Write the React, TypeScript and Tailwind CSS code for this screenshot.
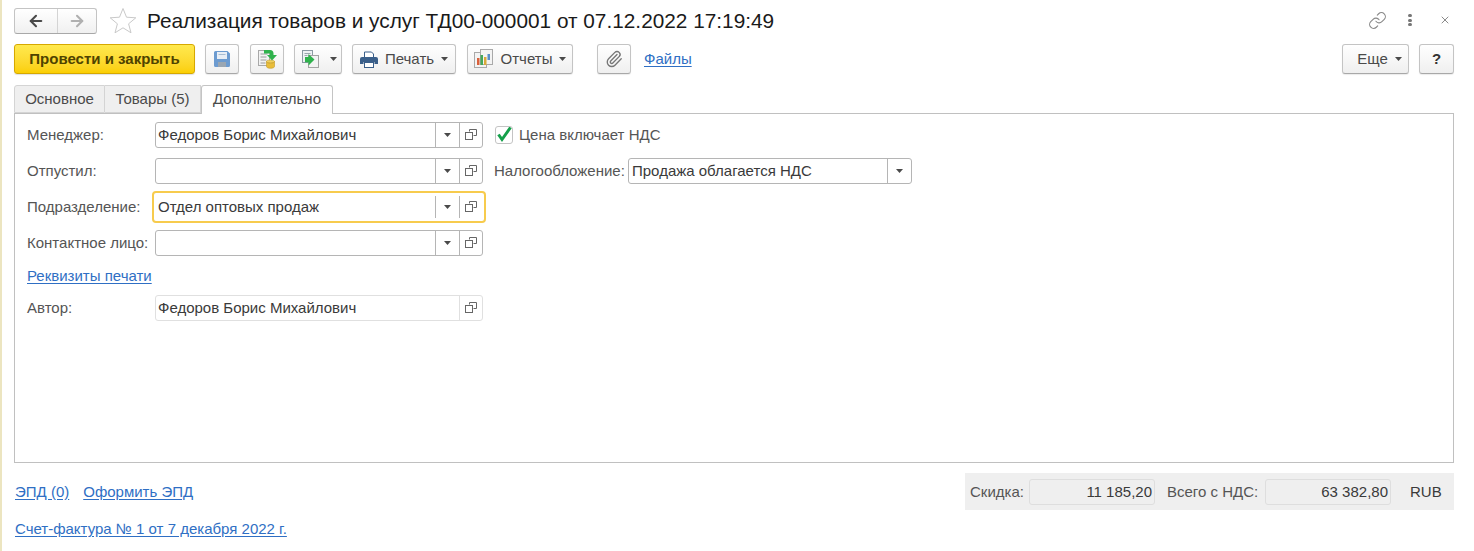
import { ArrowLeft, ArrowRight, Link as ChainIcon, Paperclip, X } from "lucide-react";
import type { ReactNode } from "react";

const Caret = () => (
  <svg width="7" height="4" viewBox="0 0 7 4" className="shrink-0">
    <path d="M0 0h7L3.5 4z" fill="#4a4a4a" />
  </svg>
);

const OpenIcon = () => (
  <svg width="12" height="12" viewBox="0 0 12 12" fill="none" stroke="#666" strokeWidth="1">
    <path d="M4.5 2.5V.5h7v6h-3" />
    <rect x="0.5" y="3.5" width="7" height="7" fill="#fff" />
  </svg>
);

const SaveIcon = () => (
  <svg width="18" height="18" viewBox="0 0 18 18">
    <path d="M1 2.500A1.500 1.500 0 0 1 2.500 1h12L17 3.500v12a1.500 1.500 0 0 1-1.500 1.500h-13A1.500 1.500 0 0 1 1 15.500z" fill="#6c9bd0" />
    <rect x="4" y="2" width="10" height="7" fill="#e8eef5" />
    <rect x="5" y="12" width="8" height="5" fill="#9aa6b2" />
    <rect x="5.500" y="4" width="7" height="1" fill="#a9bdd2" />
  </svg>
);

const PostIcon = () => (
  <svg width="20" height="20" viewBox="0 0 20 20">
    <rect x="1.500" y="1.500" width="11" height="15" fill="#f3f3f3" stroke="#a8a8a8" />
    <path d="M3.500 5h7M3.500 8h6M3.500 11h6M3.500 14h5" stroke="#9a9a9a" />
    <ellipse cx="13.500" cy="12.500" rx="4" ry="1.600" fill="#f0d060" stroke="#c29b26" strokeWidth=".6" />
    <path d="M9.500 12.500v5c0 1 1.800 1.800 4 1.800s4-.8 4-1.800v-5c0 1-1.800 1.700-4 1.700s-4-.7-4-1.700z" fill="#e9bd3a" stroke="#c29b26" strokeWidth=".6" />
    <path d="M7 1h6a3.500 3.500 0 0 1 3.500 3.500V6H20l-5 5.500L10 6h3V4.500H7z" fill="#2fb24c" />
  </svg>
);

const CreateIcon = () => (
  <svg width="20" height="20" viewBox="0 0 20 20">
    <rect x="1.500" y="1.500" width="10" height="12" fill="#eef1f3" stroke="#8b9aa3" />
    <rect x="7.500" y="6.500" width="10" height="12" fill="#f3f3f3" stroke="#a4a4a4" />
    <path d="M3.500 4.500h6M3.500 6.500h3" stroke="#9aa6ad" />
    <path d="M4 8h3.500V5l6 5.500-6 6v-3.200H4z" fill="#2fb24c" />
  </svg>
);

const PrintIcon = () => (
  <svg width="18" height="17" viewBox="0 0 18 17">
    <path d="M4.500 1h7l2 2v4h-9z" fill="#fff" stroke="#3a5f8a" />
    <path d="M2 6h14a2 2 0 0 1 2 2v5h-3.500v-2h-11v2H0V8a2 2 0 0 1 2-2z" fill="#3a5f8a" />
    <rect x="4.500" y="11.500" width="9" height="5" fill="#fff" stroke="#3a5f8a" />
  </svg>
);

const ReportIcon = () => (
  <svg width="20" height="20" viewBox="0 0 20 20">
    <rect x="0.500" y="3.500" width="12" height="15" fill="#f3f3f3" stroke="#a9a9a9" />
    <rect x="6.500" y="0.500" width="12" height="15" fill="#f3f3f3" stroke="#a9a9a9" />
    <rect x="3" y="9" width="2.500" height="7" fill="#d9603b" />
    <rect x="6.500" y="6" width="2.500" height="10" fill="#43a75a" />
    <rect x="10" y="8" width="2.500" height="8" fill="#d9a93b" />
    <rect x="13.500" y="5" width="2.500" height="6" fill="#5b8fc9" />
  </svg>
);

const Star = () => (
  <svg width="28" height="27" viewBox="0 0 28 27" fill="none" stroke="#c9c9c9" strokeWidth="1">
    <path d="M14 1.500l3.500 8.700 9.300.6-7.200 6 2.400 9-8-5-8 5 2.400-9-7.200-6 9.300-.6z" />
  </svg>
);

const Btn = ({ className = "", children }: { className?: string; children: ReactNode }) => (
  <div className={`h-[30px] flex items-center justify-center rounded-[3px] border border-[#c4c4c4] border-b-[#a8a8a8] bg-gradient-to-b from-white to-[#efefef] shadow-[0_1px_1px_rgba(0,0,0,0.08)] text-[#4a4a4a] ${className}`}>
    {children}
  </div>
);

const Label = ({ children, className = "" }: { children: ReactNode; className?: string }) => (
  <div className={`w-[128px] shrink-0 text-[#555] ${className}`}>{children}</div>
);

const Field = ({ value = "", focused = false, choice = true, readOnly = false }: { value?: string; focused?: boolean; choice?: boolean; readOnly?: boolean }) => {
  const divider = readOnly ? "border-[#e0e0e0]" : "border-[#b5b5b5]";
  const cellHeight = focused ? "h-[22px]" : "h-full";
  return (
    <div
      className={`w-[328px] h-[26px] shrink-0 flex items-center border bg-white text-[#3a3a3a] ${
        focused
          ? "rounded-[1px] border-transparent outline-2 outline-offset-1 outline-[#f7cb4d]"
          : `rounded-[3px] ${divider}`
      }`}
    >
      <div className="flex-1 pl-[2px] truncate">{value}</div>
      {choice && (
        <div className={`w-[24px] ${cellHeight} flex items-center justify-center border-l border-[#b5b5b5]`}>
          <Caret />
        </div>
      )}
      <div className={`w-[23px] ${cellHeight} flex items-center justify-center border-l ${divider}`}>
        <OpenIcon />
      </div>
    </div>
  );
};

const SumField = ({ value }: { value: string }) => (
  <div className="w-[126px] h-[26px] flex items-center justify-end pr-[2px] rounded-[3px] border border-[#dedede] bg-[#efefef] text-[#3a3a3a]">
    {value}
  </div>
);

const Link = ({ children, className = "" }: { children: ReactNode; className?: string }) => (
  <a className={`text-[#2f6fc4] underline underline-offset-2 ${className}`}>{children}</a>
);

export default function App() {
  return (
    <div className="w-[1474px] h-[551px] overflow-hidden bg-white border-l-2 border-[#ece5c0] pl-[12px] pr-[20px] font-['Liberation_Sans',sans-serif] text-[15px] leading-[18px]">
      {/* title */}
      <div className="h-[44px] pt-[8px] flex items-start">
        <div className="w-[83px] h-[26px] flex rounded-[3px] border border-[#c4c4c4] border-b-[#a8a8a8] bg-gradient-to-b from-white to-[#f0f0f0]">
          <div className="w-[43px] flex items-center justify-center border-r border-[#d4d4d4]">
            <ArrowLeft size={18} strokeWidth={2.8} color="#4a4a4a" />
          </div>
          <div className="flex-1 flex items-center justify-center">
            <ArrowRight size={18} strokeWidth={2.8} color="#b0b0b0" />
          </div>
        </div>
        <div className="ml-[12px] -mt-[1px]">
          <Star />
        </div>
        <div className="ml-[10px] text-[20.8px] leading-[26px] text-[#1a1a1a]">
          Реализация товаров и услуг ТД00-000001 от 07.12.2022 17:19:49
        </div>
        <div className="ml-auto flex items-center h-[24px] text-[#8a8a8a]">
          <ChainIcon size={19} strokeWidth={1.4} />
          <div className="ml-[21px] w-[4px] flex flex-col gap-[1.500px]">
            <span className="block w-[4px] h-[3px] rounded-full bg-[#777]" />
            <span className="block w-[4px] h-[3px] rounded-full bg-[#777]" />
            <span className="block w-[4px] h-[3px] rounded-full bg-[#777]" />
          </div>
          <X size={12} strokeWidth={2} className="ml-[27px] mr-[3px]" />
        </div>
      </div>

      {/* toolbar */}
      <div className="h-[41px] flex items-start">
        <div className="w-[181px] h-[30px] flex items-center justify-center rounded-[3px] border border-[#d6a800] bg-gradient-to-b from-[#ffe94d] to-[#fbcf00] font-bold text-[#4f4300] shadow-[0_1px_1px_rgba(0,0,0,0.12)]">
          Провести и закрыть
        </div>
        <Btn className="ml-[10px] w-[34px]"><SaveIcon /></Btn>
        <Btn className="ml-[11px] w-[34px]"><PostIcon /></Btn>
        <Btn className="ml-[10px] w-[48px] gap-[9px] pl-[1px]"><CreateIcon /><Caret /></Btn>
        <Btn className="ml-[10px] w-[104px] gap-[7px]"><PrintIcon /><span>Печать</span><Caret /></Btn>
        <Btn className="ml-[11px] w-[106px] gap-[7px]"><ReportIcon /><span>Отчеты</span><Caret /></Btn>
        <Btn className="ml-[24px] w-[34px]"><Paperclip size={18} strokeWidth={1.8} color="#777" /></Btn>
        <Link className="ml-[13px] leading-[30px]">Файлы</Link>
        <Btn className="ml-auto w-[67px] gap-[7px] pl-[8px]"><span>Еще</span><Caret /></Btn>
        <Btn className="ml-[10px] w-[35px] font-bold text-[#333]">?</Btn>
      </div>

      {/* tabs */}
      <div className="h-[29px] flex relative z-10 text-[#4a4a4a]">
        <div className="w-[91px] h-[28px] flex items-center justify-center pb-[1px] bg-[#efefef] border border-[#d4d4d4] rounded-tl-[3px]">Основное</div>
        <div className="w-[96px] h-[28px] flex items-center justify-center pb-[1px] bg-[#efefef] border-y border-r border-[#d4d4d4]">Товары (5)</div>
        <div className="w-[132px] h-[29px] flex items-center justify-center pb-[2px] bg-white border-x border-t border-[#c4c4c4] rounded-t-[3px]">Дополнительно</div>
      </div>

      {/* panel */}
      <div className="-mt-[1px] h-[350px] border border-[#c0c0c0] pl-[12px] pt-[8px] text-[#3a3a3a]">
        <div className="flex flex-col gap-[10px]">
          <div className="flex items-center">
            <Label>Менеджер:</Label>
            <Field value="Федоров Борис Михайлович" />
            <div className="ml-[12px] w-[18px] h-[18px] flex items-center justify-center rounded-[3px] border border-[#c4c4c4] bg-white">
              <svg width="16" height="16" viewBox="0 0 16 16" fill="none" stroke="#14a04a" strokeWidth="3">
                <path d="M2.500 7.500l3.500 5L14.500 0.500" />
              </svg>
            </div>
            <span className="ml-[6px] text-[#555]">Цена включает НДС</span>
          </div>
          <div className="flex items-center">
            <Label>Отпустил:</Label>
            <Field />
            <Label className="ml-[11px] mr-[6px]">Налогообложение:</Label>
            <div className="w-[284px] h-[26px] flex items-center rounded-[3px] border border-[#b5b5b5] bg-white">
              <div className="flex-1 pl-[3px]">Продажа облагается НДС</div>
              <div className="w-[24px] h-full flex items-center justify-center border-l border-[#b5b5b5]">
                <Caret />
              </div>
            </div>
          </div>
          <div className="flex items-center">
            <Label>Подразделение:</Label>
            <Field value="Отдел оптовых продаж" focused />
          </div>
          <div className="flex items-center">
            <Label>Контактное лицо:</Label>
            <Field />
          </div>
          <div className="h-[19px] flex items-center">
            <Link>Реквизиты печати</Link>
          </div>
          <div className="flex items-center">
            <Label>Автор:</Label>
            <Field value="Федоров Борис Михайлович" choice={false} readOnly />
          </div>
        </div>
      </div>

      {/* footer */}
      <div className="mt-[10px] h-[37px] flex items-center">
        <Link className="ml-[1px]">ЭПД (0)</Link>
        <Link className="ml-[14px]">Оформить ЭПД</Link>
        <div className="ml-auto w-[489px] h-[37px] flex items-center bg-[#efefef] pl-[5px] text-[#555]">
          <span className="w-[59px]">Скидка:</span>
          <SumField value="11 185,20" />
          <span className="ml-[12px] w-[98px]">Всего с НДС:</span>
          <SumField value="63 382,80" />
          <span className="ml-[19px] text-[#3a3a3a]">RUB</span>
        </div>
      </div>
      <div className="mt-[10px]">
        <Link className="ml-[1px]">Счет-фактура № 1 от 7 декабря 2022 г.</Link>
      </div>
    </div>
  );
}
